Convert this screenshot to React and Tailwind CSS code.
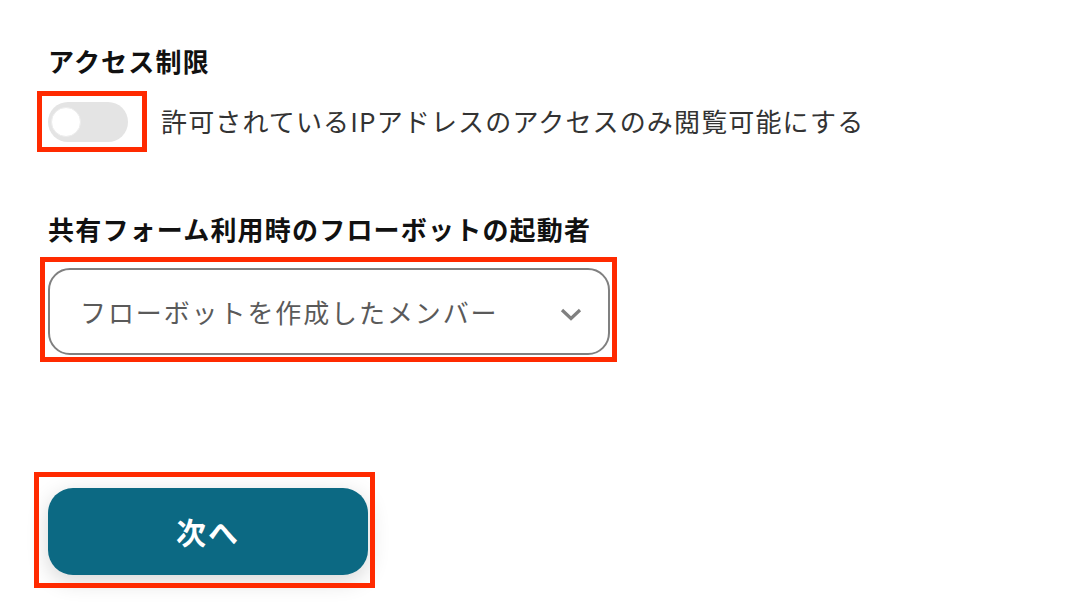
import { useState } from "react";

function Mark({ className }) {
  // red annotation frame drawn over the element
  return (
    <div
      className={`pointer-events-none absolute border-[5px] border-[#ff2a00] ${className}`}
    />
  );
}

export default function App() {
  const [allowIp, setAllowIp] = useState(false);

  return (
    <div
      className="min-h-screen bg-white pl-[48px] pt-[43px] text-[#111]"
      style={{ fontFamily: '"Noto Sans CJK JP", "Noto Sans", sans-serif' }}
    >
      {/* Access restriction */}
      <h2 className="text-[26px] font-bold leading-[36px] tracking-[1.2px]">アクセス制限</h2>
      <div className="mt-[23px] flex items-center">
        <div className="relative">
          <button
            onClick={() => setAllowIp(!allowIp)}
            className="flex h-[40px] w-[80px] items-center rounded-full bg-[#e4e4e4] px-[3px]"
          >
            <span className="h-[30px] w-[30px] rounded-full border border-[#ececec] bg-white" />
          </button>
          <Mark className="-left-[11px] -top-[11px] -right-[19px] -bottom-[10px]" />
        </div>
        <span className="ml-[33px] -mt-[3px] text-[26px] leading-[36px] tracking-[1.15px] text-[#333]">
          許可されているIPアドレスのアクセスのみ閲覧可能にする
        </span>
      </div>

      {/* Flow bot launcher */}
      <h2 className="mt-[69px] text-[26px] font-bold leading-[36px] tracking-[1.2px]">
        共有フォーム利用時のフローボットの起動者
      </h2>
      <div className="relative mt-[21px] w-[562px]">
        <div className="flex h-[87px] items-center justify-between rounded-[22px] border-2 border-[#808080] pl-[30px] pr-[26px]">
          <span className="text-[26px] leading-[36px] tracking-[1.9px] text-[#5a5a5a]">
            フローボットを作成したメンバー
          </span>
          <svg width="22" height="13" viewBox="0 0 22 13" fill="none" className="mt-[6px]">
            <path d="M2 2 L11 10.5 L20 2" stroke="#808080" strokeWidth="3.2" />
          </svg>
        </div>
        <Mark className="-left-[8px] -top-[11px] -right-[7px] -bottom-[7px]" />
      </div>

      {/* Next */}
      <div className="relative mt-[133px] w-[320px]">
        <button className="flex h-[87px] w-[320px] items-center justify-center rounded-[25px] bg-[#0c6983] text-[30px] font-bold tracking-[2px] text-white shadow-[0_6px_22px_rgba(0,0,0,0.16)]">
          次へ
        </button>
        <Mark className="-left-[14px] -top-[16px] -right-[7px] -bottom-[13px]" />
      </div>
    </div>
  );
}
